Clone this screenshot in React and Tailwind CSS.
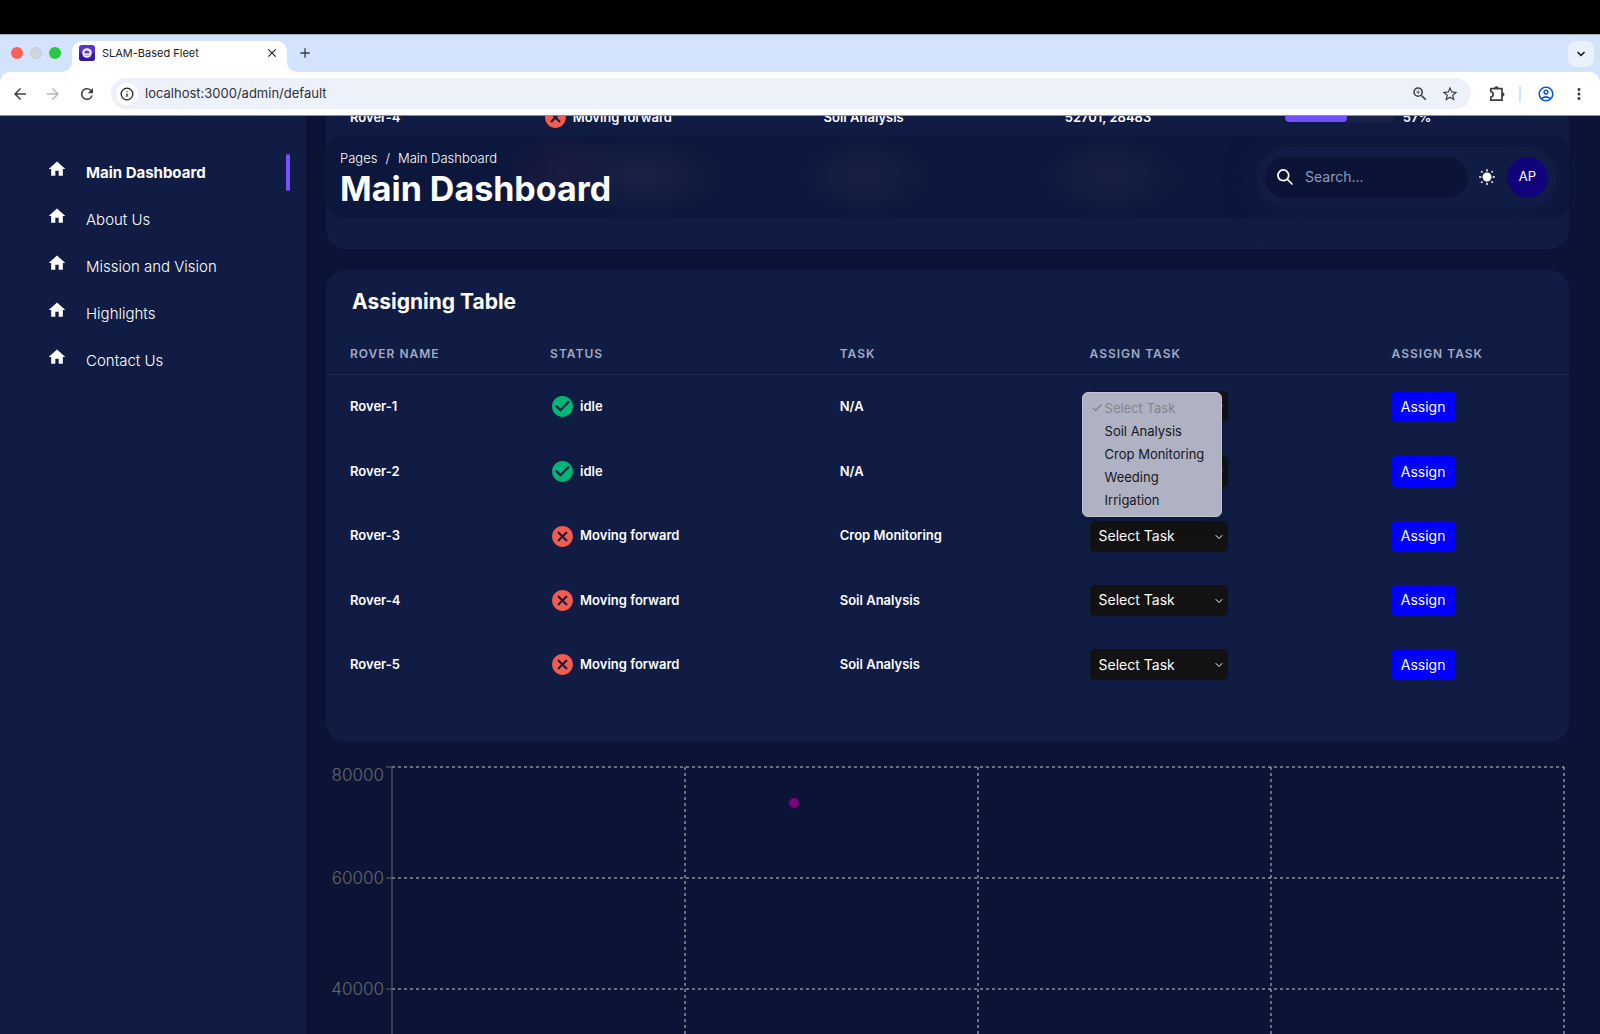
import React from "react";
import {
  MdAdd, MdArrowBack, MdArrowForward, MdCancel, MdCheckCircle, MdClose, MdHome,
  MdMoreVert, MdOutlineAccountCircle, MdRefresh, MdStarOutline, MdZoomIn,
} from "react-icons/md";
import { IoMdSunny } from "react-icons/io";
import { ChevronDown, Check, Info } from "lucide-react";

const LINKS = ["Main Dashboard", "About Us", "Mission and Vision", "Highlights", "Contact Us"];
const TASKS = ["Soil Analysis", "Crop Monitoring", "Weeding", "Irrigation"];
const ROVERS = [
  { name: "Rover-1", status: "idle", task: "N/A" },
  { name: "Rover-2", status: "idle", task: "N/A" },
  { name: "Rover-3", status: "Moving forward", task: "Crop Monitoring" },
  { name: "Rover-4", status: "Moving forward", task: "Soil Analysis" },
  { name: "Rover-5", status: "Moving forward", task: "Soil Analysis" },
];

function Favicon() {
  return (
    <svg viewBox="0 0 16 16" className="size-4 shrink-0" aria-hidden="true">
      <rect width="16" height="16" rx="3" fill="#5a35cc" />
      <path d="M0 8h16v5a3 3 0 0 1-3 3H3a3 3 0 0 1-3-3z" fill="#3a1a9c" />
      <circle cx="8" cy="8" r="4.8" fill="#f1edff" />
      <path d="M5.4 8.2a2.6 2.6 0 0 1 5.2 0z" fill="#5a3cc4" />
      <path d="M5.6 10.200h4.800" stroke="#9a86e0" strokeWidth="1" />
    </svg>
  );
}

function ExtensionIcon() {
  return (
    <svg viewBox="0 0 20 20" className="size-5" fill="none" stroke="#3c4043" strokeWidth="1.7" strokeLinejoin="round" aria-hidden="true">
      <path d="M3.8 4.6H15v11.6H3.8v-3.1c1.6-.3 2.4-1.3 2.4-2.7S5.4 8 3.8 7.7z" />
      <path d="M7.6 4.2a1.8 1.8 0 0 1 3.6 0zM15.4 8.6a1.8 1.8 0 0 1 0 3.6z" fill="#3c4043" strokeWidth="0.6" />
    </svg>
  );
}

function SearchIcon() {
  return (
    <svg viewBox="0 0 24 24" className="size-4 shrink-0" fill="#fff" aria-hidden="true">
      <path d="M23.384,21.619,16.855,15.09a9.284,9.284,0,1,0-1.768,1.768l6.529,6.529a1.266,1.266,0,0,0,1.768,0A1.251,1.251,0,0,0,23.384,21.619ZM2.75,9.5a6.75,6.75,0,1,1,6.75,6.75A6.758,6.758,0,0,1,2.75,9.5Z" />
    </svg>
  );
}

function Browser() {
  return (
    <header className="relative z-20 shrink-0 border-t border-[#a3abba] bg-[#d3e2fd] text-[#1f2023]">
      <div className="flex h-[37px] items-end">
        <div className="flex h-full items-center gap-[7px] pb-0.5 pl-[11px]">
          <span className="size-3 rounded-full bg-[#fe5f57]" />
          <span className="size-3 rounded-full border border-[#c3cad8] bg-[#d0d5de]" />
          <span className="size-3 rounded-full bg-[#28c840]" />
        </div>
        <div className="ml-px h-[10px] w-[10px] overflow-hidden bg-white">
          <div className="size-full rounded-br-[10px] bg-[#d3e2fd]" />
        </div>
        <div className="flex h-[31px] w-[215px] items-center rounded-t-[10px] bg-white pr-2 pb-[7px] pl-[7px]">
          <Favicon />
          <span className="ml-[7px] grow text-[11px]">SLAM-Based Fleet</span>
          <button aria-label="Close tab"><MdClose className="size-3.5" /></button>
        </div>
        <div className="h-[10px] w-[10px] overflow-hidden bg-white">
          <div className="size-full rounded-bl-[10px] bg-[#d3e2fd]" />
        </div>
        <button aria-label="New tab" className="flex h-full items-center pb-0.5"><MdAdd className="size-4 text-[#3c4043]" /></button>
        <button aria-label="Search tabs" className="mr-1.5 mb-[5px] ml-auto grid size-[26px] place-items-center rounded-lg bg-[#e9f1fe]">
          <ChevronDown className="size-3" strokeWidth={3.5} />
        </button>
      </div>
      <div className="flex h-[44px] items-center rounded-t-[10px] border-b border-[#8b90a0] bg-white pr-3 pl-[11px] text-[#3c4043]">
        <button aria-label="Back"><MdArrowBack className="size-[18px]" /></button>
        <button aria-label="Forward" className="ml-[15px]"><MdArrowForward className="size-[18px] text-[#b4b6b9]" /></button>
        <button aria-label="Reload" className="ml-4"><MdRefresh className="size-[18px]" /></button>
        <div className="ml-[15px] flex h-[31px] grow items-center rounded-full bg-[#ecf1fa] pr-3 pl-[5px]">
          <span className="grid size-[22px] place-items-center rounded-full bg-white">
            <Info className="size-3.5 text-[#1f2023]" strokeWidth={2.2} />
          </span>
          <input aria-label="Address" defaultValue="localhost:3000/admin/default" className="ml-[7px] min-w-0 grow bg-transparent text-[13px] text-[#303236] outline-none" />
          <button aria-label="Zoom"><MdZoomIn className="size-[18px]" /></button>
          <button aria-label="Bookmark" className="ml-3"><MdStarOutline className="size-[18px]" /></button>
        </div>
        <button aria-label="Extensions" className="ml-4"><ExtensionIcon /></button>
        <span className="ml-3 h-4 w-[2px] bg-[#d3e2fd]" />
        <button aria-label="Profile" className="ml-4"><MdOutlineAccountCircle className="size-[18px] text-[#0b57d0]" /></button>
        <button aria-label="More" className="ml-[15px]"><MdMoreVert className="size-[18px]" /></button>
      </div>
    </header>
  );
}

function Sidebar() {
  return (
    <nav aria-label="Sections" className="w-[306px] shrink-0 bg-[#111c44] pt-[33px] pr-4">
      {LINKS.map((label, i) => (
        <a key={label} href="#" className="flex h-[47px] items-center">
          <MdHome className="mb-2 ml-[47px] size-5 text-white" />
          <span className={i === 0 ? "ml-[19px] grow pt-0.5 text-[15px] font-bold text-white" : "ml-[19px] grow pt-0.5 text-[15px] font-light text-white"}>{label}</span>
          {i === 0 && <span className="h-[37px] w-1 rounded-sm bg-[#7551ff]" />}
        </a>
      ))}
    </nav>
  );
}

function Status({ value }) {
  return (
    <div className="flex items-center gap-[5px]">
      {value === "idle"
        ? <MdCheckCircle className="size-[25px] shrink-0 text-[#01b574]" />
        : <MdCancel className="size-[25px] shrink-0 text-[#ee5d50]" />}
      {value}
    </div>
  );
}

/* Tail of the status table that has scrolled beneath the navbar. */
function StatusCard() {
  return (
    <section className="-mt-[31px] rounded-b-[20px] bg-[#111c44]">
      <table className="w-full table-fixed text-left text-[13px] font-semibold text-white">
        <colgroup>
          <col className="w-[15.5%]" />
          <col className="w-[22.6%]" />
          <col className="w-[19.4%]" />
          <col className="w-[17.7%]" />
          <col />
        </colgroup>
        <tbody>
          <tr className="h-[65px]">
            <td className="pl-6">Rover-4</td>
            <td className="pl-6"><Status value="Moving forward" /></td>
            <td className="pl-6">Soil Analysis</td>
            <td className="pl-6">52701, 28483</td>
            <td className="pl-6">
              <div className="flex items-center gap-2">
                <div className="h-2 w-[110px] overflow-hidden rounded-sm bg-[#1b254b]">
                  <div className="h-full w-[57%] rounded-sm bg-[#7551ff]" />
                </div>
                57%
              </div>
            </td>
          </tr>
        </tbody>
      </table>
      <div className="h-[99px]" />
    </section>
  );
}

function Navbar() {
  return (
    <div className="absolute top-5 right-[31px] left-5 flex h-[82px] items-center justify-between rounded-2xl bg-[#0c173d] bg-[radial-gradient(ellipse_90px_44px_at_315px_40px,#1a2144_0%,transparent_100%),radial-gradient(ellipse_60px_40px_at_235px_34px,#1b1b40_0%,transparent_100%),radial-gradient(ellipse_75px_44px_at_540px_40px,#182044_0%,transparent_100%),radial-gradient(ellipse_80px_44px_at_785px_40px,#182044_0%,transparent_100%)] pr-3 pl-[14px]">
      <div className="pt-1">
        <nav aria-label="Breadcrumb" className="flex gap-2 text-[13px] leading-5 font-light text-white">
          <a href="#">Pages</a>
          <span>/</span>
          <a href="#">Main Dashboard</a>
        </nav>
        <h1 className="text-[34px] leading-[42px] font-bold text-white">Main Dashboard</h1>
      </div>
      <div className="flex h-[61px] items-center rounded-full bg-[#111c44] px-[9px] shadow-[0_4px_24px_6px_rgba(17,28,68,0.8)]">
        <label className="flex h-[41px] w-[203px] items-center gap-3 rounded-full bg-[#0b1437] pl-3">
          <SearchIcon />
          <input type="search" aria-label="Search" placeholder="Search..." className="w-[150px] bg-transparent text-sm text-white outline-none placeholder:text-[#8f9bba]" />
        </label>
        <button aria-label="Toggle theme" className="ml-[10px]"><IoMdSunny className="size-[18px] text-white" /></button>
        <button className="ml-[11px] size-[41px] rounded-full bg-[#11047a] text-[13px] text-white">AP</button>
      </div>
    </div>
  );
}

function TaskMenu() {
  return (
    <ul role="listbox" aria-label="Tasks" className="absolute top-[17px] left-4 z-10 w-[140px] rounded-md border border-[#c2c4d2] bg-[#b0b2c3] py-1 text-[13px] leading-[23px] font-normal text-[#16171c] shadow-lg">
      <li role="option" aria-selected="true" className="flex items-center pl-2 text-[#83858f]">
        <Check className="mr-0.5 size-3" strokeWidth={3} />
        Select Task
      </li>
      {TASKS.map((t) => (
        <li key={t} role="option" aria-selected="false" className="pl-[22px]">{t}</li>
      ))}
    </ul>
  );
}

function AssigningCard() {
  return (
    <section className="mt-[21px] rounded-[20px] bg-[#111c44] pb-[45px]">
      <h2 className="px-[26px] pt-4 text-[21px] leading-8 font-bold text-white">Assigning Table</h2>
      <table className="mt-[14px] h-[365px] w-full table-fixed border-collapse text-left">
        <colgroup>
          <col className="w-[16.1%]" />
          <col className="w-[23.3%]" />
          <col className="w-[20.1%]" />
          <col className="w-[24.3%]" />
          <col />
        </colgroup>
        <thead>
          <tr className="h-[42px] border-b border-[#1d2850] text-xs text-[#a0aac4]">
            {["ROVER NAME", "STATUS", "TASK", "ASSIGN TASK", "ASSIGN TASK"].map((h, i) => (
              <th key={i} scope="col" className="pt-0.5 pl-6 font-semibold tracking-[1px]">{h}</th>
            ))}
          </tr>
        </thead>
        <tbody className="text-[13px] font-semibold text-white">
          {ROVERS.map((r, i) => (
            <tr key={r.name}>
              <td className="pl-6">{r.name}</td>
              <td className="pl-6"><Status value={r.status} /></td>
              <td className="pl-6">{r.task}</td>
              <td className="relative pl-6">
                <div className="relative w-[138px]">
                  <select aria-label={"Task for " + r.name} className="block h-[31px] w-full appearance-none rounded-[5px] bg-[#121212] pl-[9px] text-sm font-normal text-white">
                    <option>Select Task</option>
                    {TASKS.map((t) => <option key={t}>{t}</option>)}
                  </select>
                  <ChevronDown className="pointer-events-none absolute top-2.5 right-[3px] size-3" />
                </div>
                {i === 0 && <TaskMenu />}
              </td>
              <td className="pl-6">
                <button className="h-[31px] w-[63px] rounded bg-[#0000ff] text-sm font-normal text-white">Assign</button>
              </td>
            </tr>
          ))}
        </tbody>
      </table>
    </section>
  );
}

function PositionChart() {
  const rows = [[80000, 0], [60000, 111], [40000, 222], [20000, 333]];
  return (
    <svg className="mt-5 h-[460px] w-full shrink-0" role="img" aria-label="Rover positions">
      {rows.slice(0, 3).map(([v, y]) => (
        <g key={v}>
          <text x="58" y={y === 0 ? 19 : y + 11} textAnchor="end" fill="#666" className="text-[17px] font-light">{v}</text>
          <line x1="60" x2="66" y1={y + 5} y2={y + 5} stroke="#666" />
        </g>
      ))}
      <svg x="66" y="5" className="h-[444px] w-[calc(100%-71px)] overflow-visible">
        {rows.map(([v, y]) => (
          <line key={v} x1="0" x2="100%" y1={y} y2={y} stroke="#ccc" strokeDasharray="3 3" />
        ))}
        {["25%", "50%", "75%", "100%"].map((x) => (
          <line key={x} x1={x} x2={x} y1="0" y2="444" stroke="#ccc" strokeDasharray="3 3" />
        ))}
        <line x1="0" x2="0" y1="0" y2="444" stroke="#666" />
        <circle cx="34.3%" cy="36" r="5" fill="#800080" />
      </svg>
    </svg>
  );
}

export default function App() {
  return (
    <div className="flex h-screen flex-col overflow-hidden bg-[#0b1437] font-['Inter',sans-serif]">
      <div className="h-[34px] shrink-0 bg-black" />
      <Browser />
      <div className="flex min-h-0 grow">
        <Sidebar />
        <main className="relative flex min-w-0 grow flex-col overflow-hidden pr-[31px] pl-5">
          <StatusCard />
          <AssigningCard />
          <PositionChart />
          <Navbar />
        </main>
      </div>
    </div>
  );
}
